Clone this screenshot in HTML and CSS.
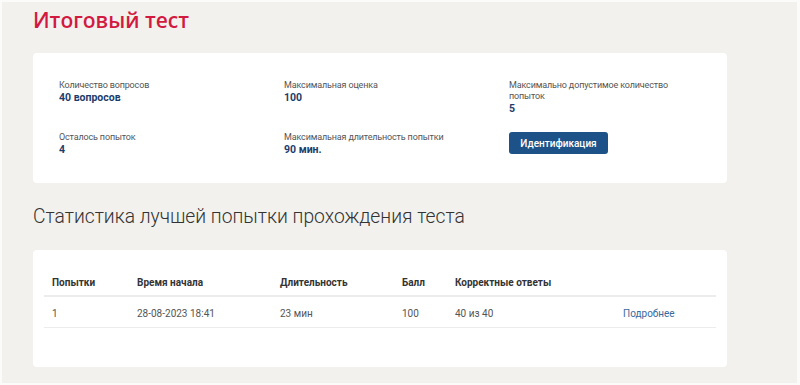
FILE: index.html
```html
<!DOCTYPE html>
<html lang="ru">

<head>
    <meta charset="UTF-8">
    <meta name="viewport" content="width=device-width, initial-scale=1.0">
    <title>Итоговый тест</title>
    <link rel="stylesheet" href="styles.css">
</head>

<body>
    <div class="page">
        <h1 class="title">Итоговый тест</h1>

        <!-- Test info -->
        <div class="card info-card">
            <div class="info-grid">
                <div class="info-item">
                    <div class="info-label">Количество вопросов</div>
                    <div class="info-value">40 вопросов</div>
                </div>
                <div class="info-item">
                    <div class="info-label">Максимальная оценка</div>
                    <div class="info-value">100</div>
                </div>
                <div class="info-item">
                    <div class="info-label">Максимально допустимое количество попыток</div>
                    <div class="info-value">5</div>
                </div>
                <div class="info-item">
                    <div class="info-label">Осталось попыток</div>
                    <div class="info-value">4</div>
                </div>
                <div class="info-item">
                    <div class="info-label">Максимальная длительность попытки</div>
                    <div class="info-value">90 мин.</div>
                </div>
                <div class="info-item">
                    <button class="btn-primary">Идентификация</button>
                </div>
            </div>
        </div>

        <h2 class="section-title">Статистика лучшей попытки прохождения теста</h2>

        <!-- Best attempt table -->
        <div class="card table-card">
            <table class="stats-table">
                <colgroup>
                    <col style="width: 85px">
                    <col style="width: 143px">
                    <col style="width: 122px">
                    <col style="width: 53px">
                    <col style="width: 168px">
                    <col>
                </colgroup>
                <thead>
                    <tr>
                        <th>Попытки</th>
                        <th>Время начала</th>
                        <th>Длительность</th>
                        <th>Балл</th>
                        <th>Корректные ответы</th>
                        <th></th>
                    </tr>
                </thead>
                <tbody>
                    <tr>
                        <td>1</td>
                        <td>28-08-2023 18:41</td>
                        <td>23 мин</td>
                        <td>100</td>
                        <td>40 из 40</td>
                        <td><a href="#" class="details-link">Подробнее</a></td>
                    </tr>
                </tbody>
            </table>
        </div>
    </div>
</body>

</html>
```

FILE: styles.css
```css
html {
    background-color: #fbfbfa;
}

body {
    margin: 2px 3px 2px 2px;
    min-height: calc(100vh - 4px);
    background-color: #f2f1ee;
    font-family: Roboto, "Noto Sans", sans-serif;
    color: #444;
}

.page {
    width: 694px;
    margin-left: 31px;
    padding-top: 4px;
}

/* Page title */
.title {
    margin: 0;
    font-family: "Open Sans", sans-serif;
    font-size: 21px;
    line-height: 28px;
    font-weight: 600;
    color: #d2193f;
}

.card {
    background-color: #fff;
    border-radius: 4px;
}

/* Info card */
.info-card {
    margin-top: 19px;
    padding: 27px 26px 27px 26px;
}

.info-grid {
    display: grid;
    grid-template-columns: 225px 225px 175px;
    row-gap: 17px;
}

.info-label {
    font-size: 9px;
    line-height: 11px;
    letter-spacing: -0.15px;
    color: #555;
}

.info-value {
    font-size: 10.5px;
    line-height: 13px;
    font-weight: 700;
    color: #1c3d6b;
}

.btn-primary {
    display: block;
    width: 99px;
    height: 22px;
    padding: 0;
    border: none;
    border-radius: 3px;
    background-color: #1d5288;
    color: #fff;
    font-family: inherit;
    font-size: 10px;
    font-weight: 500;
    cursor: pointer;
}

/* Section title */
.section-title {
    margin: 22px 0 21px;
    font-size: 19.3px;
    line-height: 24px;
    font-weight: 300;
    color: #333;
}

/* Stats table */
.table-card {
    padding: 17px 11px 39px;
}

.stats-table {
    width: 100%;
    border-collapse: collapse;
    table-layout: fixed;
    font-size: 10px;
    line-height: 14px;
}

.stats-table th {
    padding: 9px 8px 5px;
    text-align: left;
    font-weight: 700;
    color: #333;
    border-bottom: 2px solid #ececec;
}

.stats-table td {
    padding: 10px 8px 6px;
    color: #555;
    border-bottom: 1px solid #ececec;
}

.details-link {
    color: #3a6a9c;
    text-decoration: none;
}
```
